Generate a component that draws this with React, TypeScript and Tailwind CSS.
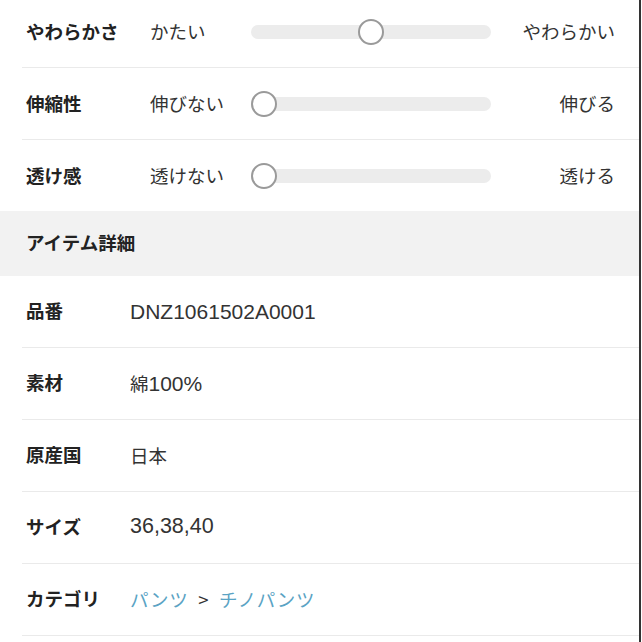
const font = { fontFamily: '"Noto Sans CJK JP", "Noto Sans", sans-serif' };
const latin = { fontFamily: '"Liberation Sans", "Noto Sans CJK JP", sans-serif' };

const sliders = [
  { label: "やわらかさ", left: "かたい", right: "やわらかい", pos: 50, h: "h-[68px] pb-[3px] border-b" },
  { label: "伸縮性", left: "伸びない", right: "伸びる", pos: 0, h: "h-[72px] border-b" },
  { label: "透け感", left: "透けない", right: "透ける", pos: 0, h: "h-[71px]" },
];

function Slider({ pos }: { pos: number }) {
  return (
    <div className="relative h-[26px] w-[240px] flex items-center">
      <div className="h-[14px] w-full rounded-full bg-[#ececec]" />
      <div
        className="absolute top-0 h-[26px] w-[26px] rounded-full border-2 border-[#9a9a9a] bg-white"
        style={{ left: `calc(${pos}% - ${(pos / 100) * 26}px)` }}
      />
    </div>
  );
}

const details: { label: string; value: React.ReactNode }[] = [
  { label: "品番", value: <span className="text-[21px]" style={latin}>DNZ1061502A0001</span> },
  {
    label: "素材",
    value: (
      <span>
        綿<span className="text-[21px]" style={latin}>100%</span>
      </span>
    ),
  },
  { label: "原産国", value: "日本" },
  { label: "サイズ", value: <span className="text-[21.5px]" style={latin}>36,38,40</span> },
  {
    label: "カテゴリ",
    value: (
      <span className="tracking-[0.6px]">
        <span className="text-[#5aa3c4]">パンツ</span>
        <span className="mx-[10px] text-[#333]">&gt;</span>
        <span className="text-[#5aa3c4]">チノパンツ</span>
      </span>
    ),
  },
];

export default function App() {
  return (
    <div className="w-[642px] h-[642px] overflow-hidden bg-white text-[#222] text-[18.5px]" style={font}>
      <div className="border-r-2 border-[#333] w-[641px] h-full">
        {sliders.map((s) => (
          <div key={s.label} className={`${s.h} border-[#eaeaea] ml-[22px] pl-[4px] pr-[24px] flex items-center`}>
            <div className="w-[124px] font-bold">{s.label}</div>
            <div className="w-[101px] text-[#333]">{s.left}</div>
            <Slider pos={s.pos} />
            <div className="flex-1 text-right text-[#333]">{s.right}</div>
          </div>
        ))}
        <div className="h-[65px] pb-[2px] bg-[#f2f2f2] flex items-center pl-[26px] font-bold">アイテム詳細</div>
        {details.map((d) => (
          <div key={d.label} className="h-[72px] pb-[1px] ml-[22px] pl-[4px] flex items-center border-b border-[#eaeaea]">
            <div className="w-[104px] font-bold">{d.label}</div>
            <div className="text-[#333] leading-none">{d.value}</div>
          </div>
        ))}
      </div>
    </div>
  );
}
